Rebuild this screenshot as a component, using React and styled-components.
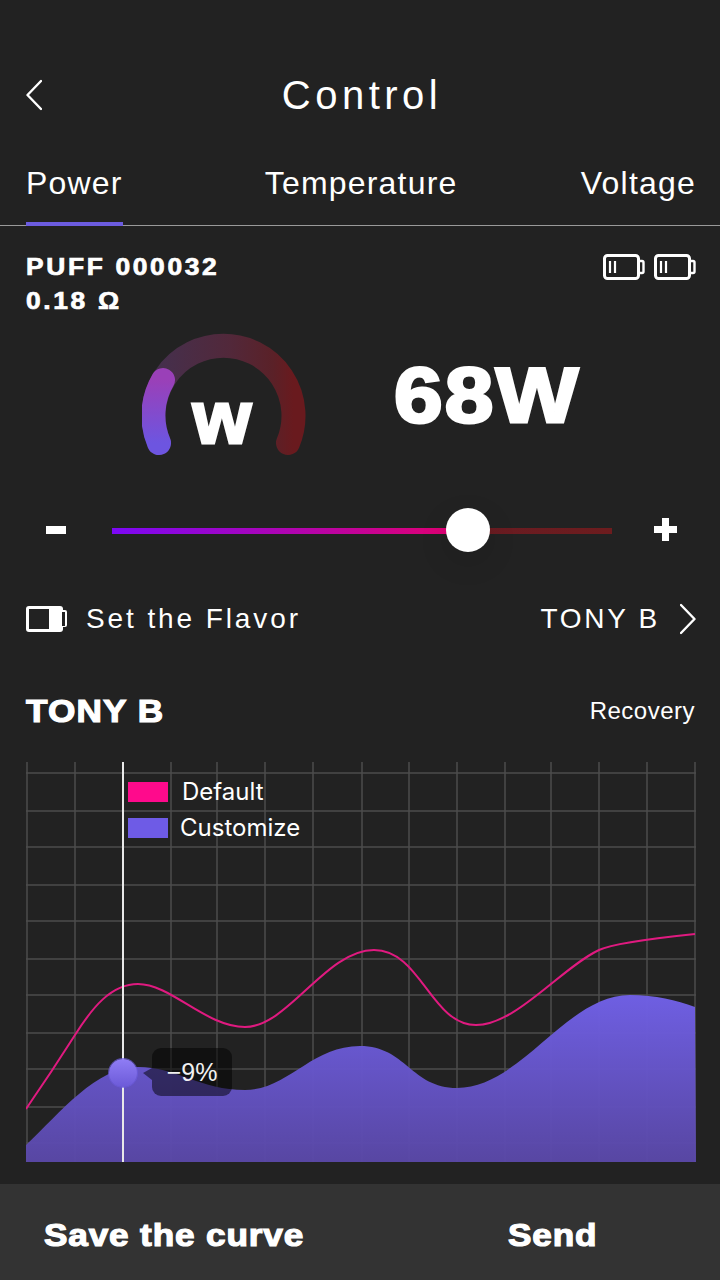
import styled, { createGlobalStyle, css } from 'styled-components';

const GlobalStyle = createGlobalStyle`
  html, body { margin: 0; padding: 0; background: #222222; }
  * { box-sizing: border-box; }
`;

const SANS = `"Liberation Sans", Arial, sans-serif`;

// chart coordinates are page coordinates minus the chart origin (26, 762)
const CHART_W = 670;
const CHART_H = 400;
const V_LINES = [1, 49, 145, 191, 239, 287, 336, 383, 431, 479, 525, 573, 621, 669];
const H_LINES = [11, 49, 85, 123, 159, 197, 233, 271, 307, 345, 381];

const DEFAULT_CURVE =
  'M0 347C20 318 35 295 49 273C66 246 85 222 112 222C145 222 180 265 219 265C262 265 300 188 348 188C395 188 405 263 450 263C490 263 535 206 573 188C590 180 640 175 669 172';
const CUSTOM_CURVE =
  'M0 383C35 350 70 305 112 305C150 305 175 328 219 328C262 328 285 284 334 284C380 284 385 326 431 326C495 326 540 233 604 233C630 233 650 238 669 245';

// the source uses a heavier, wider face than Liberation Bold
const heavy = css`
  display: inline-block;
  font-weight: 700;
  transform: scaleX(1.1);
  transform-origin: left center;
`;

const Page = styled.div`
  width: 720px;
  height: 1280px;
  background: #222222;
  color: #ffffff;
  font-family: ${SANS};
  display: flex;
  flex-direction: column;
  overflow: hidden;
`;

const Header = styled.header`
  margin-top: 64px;
  height: 62px;
  padding: 0 26px;
  display: grid;
  grid-template-columns: 60px 1fr 60px;
  align-items: center;
`;

const Title = styled.h1`
  margin: 0;
  padding-left: 4px;
  text-align: center;
  font-size: 40px;
  font-weight: 400;
  letter-spacing: 4.5px;
  line-height: 62px;
`;

const Tabs = styled.nav`
  margin-top: 24px;
  height: 76px;
  padding: 0 24px 0 26px;
  display: flex;
  justify-content: space-between;
  border-bottom: 1px solid #9a9a9a;
`;

const Tab = styled.div`
  height: 76px;
  padding-top: 14px;
  font-size: 32px;
  line-height: 38px;
  letter-spacing: 1.2px;
  border-bottom: 4px solid ${(p) => (p.$active ? '#6c5ce0' : 'transparent')};
`;

const MiddleTab = styled(Tab)`
  margin: 0 auto 0 142px;
`;

const InfoRow = styled.section`
  margin-top: 24px;
  padding: 0 24px 0 26px;
  display: flex;
  justify-content: space-between;
  align-items: flex-start;
`;

const InfoText = styled.div`
  ${heavy}
  font-size: 24px;
  line-height: 34px;
  letter-spacing: 2.4px;
  -webkit-text-stroke: 0.7px #ffffff;
`;

const Batteries = styled.div`
  margin-top: 4px;
  display: flex;
  gap: 9px;
`;

const Readout = styled.section`
  margin-top: 14px;
  padding-left: 142px;
  display: flex;
  align-items: flex-start;
`;

const Gauge = styled.div`
  width: 164px;
  height: 126px;
  display: grid;
  & > * { grid-area: 1 / 1; }
`;

const GaugeUnit = styled.div`
  justify-self: center;
  margin-top: 47px;
  margin-left: -4px;
  font-size: 75px;
  line-height: 76px;
  font-weight: 700;
  -webkit-text-stroke: 3px #ffffff;
`;

const Value = styled.div`
  ${heavy}
  margin-left: 88px;
  margin-top: 15px;
  font-size: 78px;
  line-height: 96px;
  letter-spacing: 2px;
  transform: scaleX(1.12);
  -webkit-text-stroke: 3px #ffffff;
`;

const SliderRow = styled.section`
  margin-top: 51px;
  height: 44px;
  padding: 0 0 0 46px;
  display: flex;
  align-items: center;
`;

const SignIcon = styled.svg`
  margin-bottom: 3px;
`;

const Track = styled.div`
  position: relative;
  width: 500px;
  height: 6px;
  margin: 0 42px 0 46px;
  background: linear-gradient(90deg, #5e1a2c, #6d1c1e);
`;

const TrackFill = styled.div`
  height: 100%;
  width: ${(p) => p.$value}%;
  background: linear-gradient(90deg, #7c08f5, #e5006c);
`;

const Thumb = styled.div`
  position: absolute;
  top: -20px;
  left: ${(p) => p.$value}%;
  width: 44px;
  height: 44px;
  margin-left: -22px;
  border-radius: 50%;
  background: #ffffff;
  box-shadow: 0 10px 30px rgba(0, 0, 0, 0.12);
`;

const FlavorRow = styled.section`
  margin-top: 51px;
  height: 30px;
  padding: 0 24px 0 26px;
  display: flex;
  align-items: center;
`;

const FlavorLabel = styled.span`
  margin-left: 18px;
  font-size: 28px;
  line-height: 30px;
  letter-spacing: 2.9px;
  flex: 1;
`;

const FlavorValue = styled.span`
  margin-right: 20px;
  font-size: 28px;
  line-height: 30px;
  letter-spacing: 2.7px;
`;

const ChartHead = styled.section`
  margin-top: 58px;
  height: 38px;
  padding: 0 25px 0 26px;
  display: flex;
  justify-content: space-between;
  align-items: center;
`;

const ChartTitle = styled.h2`
  ${heavy}
  margin: 0;
  font-size: 32px;
  line-height: 38px;
  letter-spacing: 1px;
  -webkit-text-stroke: 1.2px #ffffff;
`;

const Recovery = styled.span`
  font-size: 24px;
  line-height: 38px;
  letter-spacing: 0.5px;
`;

const Chart = styled.section`
  position: relative;
  margin: 32px 0 0 26px;
  width: ${CHART_W}px;
  height: ${CHART_H}px;
  svg { display: block; }
`;

const Legend = styled.div`
  position: absolute;
  left: 102px;
  top: 20px;
  display: flex;
  flex-direction: column;
  gap: 16px;
  font-family: Inter, ${SANS};
  font-size: 24px;
`;

const LegendRow = styled.div`
  height: 20px;
  display: flex;
  align-items: center;
  gap: ${(p) => p.$gap}px;
  line-height: 20px;
`;

const Swatch = styled.i`
  width: 40px;
  height: 20px;
  background: ${(p) => p.$color};
`;

const Marker = styled.div`
  position: absolute;
  left: 83px;
  top: 297px;
  width: 28px;
  height: 28px;
  border-radius: 50%;
  background: linear-gradient(180deg, #8f7df5, #6c5ad8);
  box-shadow: 0 0 0 1px rgba(108, 92, 224, 0.7);
`;

const Tooltip = styled.div`
  position: absolute;
  left: 126px;
  top: 286px;
  width: 80px;
  height: 48px;
  border-radius: 9px;
  background: rgba(0, 0, 0, 0.5);
  font-size: 25px;
  line-height: 48px;
  text-align: center;
  color: #f0f0f0;
  &::before {
    content: '';
    position: absolute;
    left: -9px;
    top: 20px;
    border-top: 5px solid transparent;
    border-bottom: 7px solid transparent;
    border-right: 9px solid rgba(0, 0, 0, 0.5);
  }
`;

const BottomBar = styled.footer`
  margin-top: auto;
  height: 96px;
  background: #333333;
  display: grid;
  grid-template-columns: 464px 1fr;
  align-items: center;
`;

const BarButton = styled.button`
  border: none;
  background: none;
  padding: 6px 0 0 44px;
  text-align: left;
  color: #ffffff;
  font-family: ${SANS};
  font-size: 32px;
  white-space: nowrap;
  span {
    ${heavy}
    letter-spacing: 0.75px;
    -webkit-text-stroke: 1.2px #ffffff;
  }
`;

const BatteryIcon = () => (
  <svg width="42" height="26" viewBox="0 0 42 26" fill="none" stroke="#fff">
    <rect x="1.5" y="1.5" width="34" height="23" rx="3" strokeWidth="3" />
    <path d="M36 7h3a1.5 1.5 0 0 1 1.5 1.5v9a1.5 1.5 0 0 1-1.5 1.5h-3" strokeWidth="2.4" />
    <path d="M7 7v12M12 7v12" strokeWidth="2.2" />
  </svg>
);

const FlavorIcon = () => (
  <svg width="42" height="26" viewBox="0 0 42 26">
    <rect width="37" height="26" rx="3" fill="#fff" />
    <path d="M37 4h2a2 2 0 0 1 2 2v13a2 2 0 0 1-2 2h-2z" fill="#fff" />
    <rect x="3" y="3" width="20" height="20" fill="#222" />
    <rect x="36" y="6" width="3" height="14" fill="#222" />
  </svg>
);

const Chevron = ({ dir }) => (
  <svg width="16" height="32" viewBox="0 0 16 32" fill="none" stroke="#fff" strokeWidth="2.4" strokeLinecap="round" strokeLinejoin="round">
    <path d={dir === 'left' ? 'M15 2 1.5 16 15 30' : 'M1 2l13.5 14L1 30'} />
  </svg>
);

const MinusIcon = () => (
  <SignIcon width="20" height="8" viewBox="0 0 20 8"><rect width="20" height="8" fill="#fff" /></SignIcon>
);

const PlusIcon = () => (
  <SignIcon width="23" height="23" viewBox="0 0 23 23"><path d="M8 0h7v8h8v7h-8v8H8v-8H0V8h8z" fill="#fff" /></SignIcon>
);

const GaugeArc = () => (
  <svg width="164" height="126" viewBox="0 0 164 126" fill="none" strokeWidth="24" strokeLinecap="round">
    <defs>
      <linearGradient id="gaugeBack" x1="0" y1="0" x2="1" y2="0">
        <stop offset="0" stopColor="#44304e" />
        <stop offset="0.55" stopColor="#52283a" />
        <stop offset="0.85" stopColor="#5a2128" />
        <stop offset="1" stopColor="#691a1e" />
      </linearGradient>
      <linearGradient id="gaugeFront" x1="0" y1="1" x2="0" y2="0">
        <stop offset="0" stopColor="#6d55e0" />
        <stop offset="1" stopColor="#9a40b8" />
      </linearGradient>
    </defs>
    <path d="M146 111A70 70 0 1 0 17 111" stroke="url(#gaugeBack)" />
    <path d="M17 111A70 70 0 0 1 21 48" stroke="url(#gaugeFront)" />
  </svg>
);

const ChartPlot = () => (
  <svg width={CHART_W} height={CHART_H} viewBox={`0 0 ${CHART_W} ${CHART_H}`} fill="none">
    <defs>
      <linearGradient id="areaFill" gradientUnits="userSpaceOnUse" x1="0" y1="233" x2="0" y2="400">
        <stop offset="0" stopColor="#7060e6" stopOpacity="0.98" />
        <stop offset="1" stopColor="#5a48a8" stopOpacity="0.96" />
      </linearGradient>
    </defs>
    {V_LINES.map((x) => (
      <path key={x} d={`M${x} 0V${CHART_H}`} stroke="#4c4c4c" strokeWidth="1.5" />
    ))}
    {H_LINES.map((y) => (
      <path key={y} d={`M0 ${y}H${CHART_W}`} stroke="#4c4c4c" strokeWidth="1.5" />
    ))}
    <path d={`${CUSTOM_CURVE}L${CHART_W} ${CHART_H}L0 ${CHART_H}Z`} fill="url(#areaFill)" />
    <path d={DEFAULT_CURVE} stroke="#e01a80" strokeWidth="2" />
    <path d={`M97 0V${CHART_H}`} stroke="#e8e8e8" strokeWidth="2" />
  </svg>
);

export default function App() {
  const power = 71.2;
  return (
    <Page>
      <GlobalStyle />
      <Header>
        <Chevron dir="left" />
        <Title>Control</Title>
      </Header>
      <Tabs>
        <Tab $active>Power</Tab>
        <MiddleTab>Temperature</MiddleTab>
        <Tab>Voltage</Tab>
      </Tabs>
      <InfoRow>
        <InfoText>
          PUFF 000032
          <br />
          0.18 Ω
        </InfoText>
        <Batteries>
          <BatteryIcon />
          <BatteryIcon />
        </Batteries>
      </InfoRow>
      <Readout>
        <Gauge>
          <GaugeArc />
          <GaugeUnit>w</GaugeUnit>
        </Gauge>
        <Value>68W</Value>
      </Readout>
      <SliderRow>
        <MinusIcon />
        <Track>
          <TrackFill $value={power} />
          <Thumb $value={power} />
        </Track>
        <PlusIcon />
      </SliderRow>
      <FlavorRow>
        <FlavorIcon />
        <FlavorLabel>Set the Flavor</FlavorLabel>
        <FlavorValue>TONY B</FlavorValue>
        <Chevron dir="right" />
      </FlavorRow>
      <ChartHead>
        <ChartTitle>TONY B</ChartTitle>
        <Recovery>Recovery</Recovery>
      </ChartHead>
      <Chart>
        <ChartPlot />
        <Legend>
          <LegendRow $gap={14}>
            <Swatch $color="#ff0a8c" />
            Default
          </LegendRow>
          <LegendRow $gap={12}>
            <Swatch $color="#6e5be6" />
            Customize
          </LegendRow>
        </Legend>
        <Marker />
        <Tooltip>−9%</Tooltip>
      </Chart>
      <BottomBar>
        <BarButton><span>Save the curve</span></BarButton>
        <BarButton><span>Send</span></BarButton>
      </BottomBar>
    </Page>
  );
}
